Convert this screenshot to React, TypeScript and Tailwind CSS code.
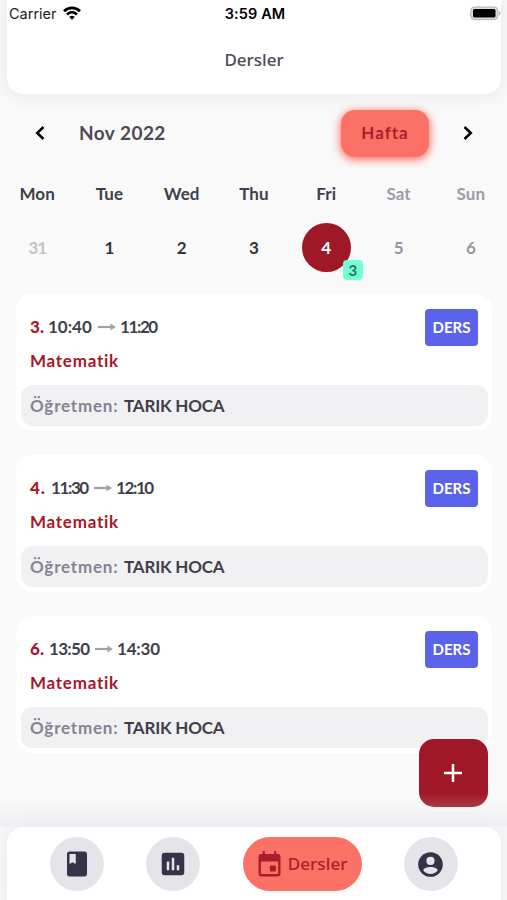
import React from "react";
import { MdAssessment, MdBook } from "react-icons/md";

const days = [
  { name: "Mon", date: 31, nameColor: "text-[#3f3f4b]", dateColor: "text-[#c3c3c7] tracking-[-1.2px]" },
  { name: "Tue", date: 1, nameColor: "text-[#3f3f4b]", dateColor: "text-[#33333b]" },
  { name: "Wed", date: 2, nameColor: "text-[#3f3f4b]", dateColor: "text-[#33333b]" },
  { name: "Thu", date: 3, nameColor: "text-[#3f3f4b]", dateColor: "text-[#33333b]" },
  { name: "Fri", date: 4, nameColor: "text-[#3f3f4b]", dateColor: "text-white", lessons: 3 },
  { name: "Sat", date: 5, nameColor: "text-[#9c9ba9]", dateColor: "text-[#96969d]" },
  { name: "Sun", date: 6, nameColor: "text-[#9c9ba9]", dateColor: "text-[#96969d]" },
];

const lessons = [
  {
    order: 3,
    start: "10:40",
    end: "11:20",
    orderClass: "w-[18px]",
    startClass: "w-[45px]",
    endClass: "tracking-[-1.4px]",
  },
  {
    order: 4,
    start: "11:30",
    end: "12:10",
    orderClass: "w-[21px] tracking-[0.8px]",
    startClass: "w-[38px] tracking-[-1.4px]",
    endClass: "tracking-[-1.4px]",
  },
  {
    order: 6,
    start: "13:50",
    end: "14:30",
    orderClass: "w-[19px]",
    startClass: "w-[41px] tracking-[-0.7px]",
    endClass: "tracking-[-0.2px]",
  },
];

type Lesson = (typeof lessons)[number];

const StatusBar: React.FC = () => (
  <div className="grid h-7 grid-cols-3 items-center pl-[9px] pr-[6px] font-['Inter',sans-serif] text-[14.5px] text-[#202022]">
    <div className="flex items-center gap-[6px]">
      <span>Carrier</span>
      <svg className="-mt-[2px] h-[14px] w-[18px]" viewBox="0 0 18 14" fill="none" stroke="#000" strokeWidth="2.7">
        <path d="M1 5.2C5.6.8 12.4.8 17 5.2" />
        <path d="M4 8.4c2.9-2.7 7.1-2.7 10 0" />
        <path d="M6.2 10.9 9 13.7l2.8-2.8c-1.7-1.4-3.9-1.4-5.6 0Z" fill="#000" stroke="none" />
      </svg>
    </div>
    <span className="text-center font-semibold tracking-[0.1px] text-black">3:59 AM</span>
    <svg className="-mt-[2px] h-[15px] w-[31px] justify-self-end" viewBox="0 0 31 15">
      <rect x="0.8" y="1" width="27" height="12.6" rx="3.6" fill="#dedede" stroke="#b0b0b0" />
      <rect x="3" y="3" width="22.5" height="8.6" rx="1.6" fill="#000" />
      <path d="M29 5.2c2 .8 2 3.4 0 4.2Z" fill="#aaa" />
    </svg>
  </div>
);

const CalendarIcon: React.FC = () => (
  <svg className="h-[26px] w-[23px]" viewBox="0 0 23 26">
    <rect x="1.7" y="4.2" width="19.6" height="20" rx="1.6" fill="none" stroke="#a71f2d" strokeWidth="2.4" />
    <path d="M1.5 3.5h20v7h-20z" fill="#a71f2d" />
    <path d="M5.8 1v4M17.2 1v4" stroke="#a71f2d" strokeWidth="2.2" strokeLinecap="round" />
    <rect x="11.8" y="14.4" width="6.2" height="6.2" rx="1" fill="#a71f2d" />
  </svg>
);

const AccountIcon: React.FC = () => (
  <svg className="h-[25px] w-[25px]" viewBox="0 0 25 25">
    <circle cx="12.5" cy="12.5" r="12.3" fill="#343347" />
    <circle cx="12.5" cy="8.9" r="4.1" fill="#e5e5e9" />
    <path d="M5.3 18.4c0-2.2 3.6-3.5 7.2-3.5s7.2 1.3 7.2 3.5c-1.7 2.3-4.3 3.5-7.2 3.5s-5.5-1.2-7.2-3.5Z" fill="#e5e5e9" />
  </svg>
);

const LessonCard: React.FC<{ lesson: Lesson }> = ({ lesson }) => (
  <div className="h-[137px] rounded-[16px] bg-white pl-[5px] pr-1 pt-[15px]">
    <div className="flex h-[76px] justify-between pl-[9px] pr-[10px]">
      <div>
        <div className="flex h-[36px] items-center text-[17px] font-bold text-[#3f3f4b]">
          <span className={`font-black text-[#a71728] ${lesson.orderClass}`}>{lesson.order}.</span>
          <span className={lesson.startClass}>{lesson.start}</span>
          <svg className="ml-[5px] mr-1 h-2 w-[18px]" viewBox="0 0 18 8">
            <path d="M0 4h14" stroke="#a0a0aa" strokeWidth="2.2" />
            <path d="m12.5 .6 5.3 3.4-5.3 3.4Z" fill="#a0a0aa" />
          </svg>
          <span className={lesson.endClass}>{lesson.end}</span>
        </div>
        <div className="flex h-[32px] items-center text-[17px] font-bold tracking-[0.75px] text-[#a71728]">
          Matematik
        </div>
      </div>
      <div className="flex h-[37px] w-[53px] items-center justify-center rounded-[4px] bg-[#5b63eb] text-[15px] font-bold text-white">
        DERS
      </div>
    </div>
    <div className="flex h-[41px] items-center gap-[5px] rounded-[12px] bg-[#f1f1f3] px-[9px] text-[17px] font-bold">
      <span className="w-[89px] tracking-[0.8px] text-[#858391]">Öğretmen:</span>
      <span className="tracking-[-0.2px] text-[#3f3f4b]">TARIK HOCA</span>
    </div>
  </div>
);

const App: React.FC = () => {
  return (
    <div className="relative flex h-[900px] w-[507px] flex-col overflow-hidden bg-[#f9f9f9] font-['Lato',sans-serif]">
      <header className="ml-[7px] mr-[6px] h-[94px] shrink-0 rounded-b-[16px] bg-white shadow-[0_0_16px_4px_#ededf2]">
        <div className="-ml-[7px] -mr-[6px]">
          <StatusBar />
        </div>
        <h1 className="mt-5 text-center font-['Noto_Sans',sans-serif] text-[17px] leading-6 font-medium text-[#4b4a55]">
          Dersler
        </h1>
      </header>

      <div className="mt-[15px] flex h-[48px] shrink-0 items-center pl-[34px] pr-[33px]">
        <svg className="h-[16px] w-[12px]" viewBox="0 0 12 16" fill="none" stroke="#000" strokeWidth="2.5">
          <path d="M9.5 2 3.2 8l6.3 6" />
        </svg>
        <span className="ml-[33px] flex-1 text-[19px] font-bold tracking-[0.45px] text-[#4b4a55]">Nov 2022</span>
        <button className="h-[47px] w-[88px] rounded-[14px] bg-[#fc7166] text-[17px] font-bold tracking-[1px] text-[#a71f2d] shadow-[0_2px_9px_1px_#fc7166]">
          Hafta
        </button>
        <svg className="ml-[33px] h-[16px] w-[12px]" viewBox="0 0 12 16" fill="none" stroke="#000" strokeWidth="2.5">
          <path d="m2.5 2 6.3 6-6.3 6" />
        </svg>
      </div>

      <div className="mt-[25px] grid h-[92px] shrink-0 grid-cols-7 pl-px text-center text-[17px] font-bold">
        {days.map((day) => (
          <div key={day.name} className="flex flex-col items-center">
            <span className={`h-[41px] leading-6 tracking-[0.1px] ${day.nameColor}`}>{day.name}</span>
            <div
              className={`relative flex h-[49px] w-[49px] items-center justify-center rounded-full ${day.dateColor} ${
                day.lessons ? "bg-[#9f1827]" : ""
              }`}
            >
              {day.date}
              {day.lessons && (
                <span className="absolute top-[37px] left-[41px] h-5 w-5 rounded-[4px] bg-[#73ffd5] text-[15px] leading-5 text-[#24775e]">
                  {day.lessons}
                </span>
              )}
            </div>
          </div>
        ))}
      </div>

      <main className="mt-[20px] flex flex-col gap-6 pl-4 pr-[15px]">
        {lessons.map((lesson) => (
          <LessonCard key={lesson.order} lesson={lesson} />
        ))}
      </main>

      <div className="pointer-events-none absolute inset-x-0 bottom-[73px] h-7 bg-linear-to-b from-transparent to-[#f0f0f4]" />

      <button className="absolute top-[739px] left-[419px] flex h-[68px] w-[69px] items-center justify-center rounded-[15px] bg-linear-to-b from-[#9f1827] from-80% to-[#ad3643]">
        <svg className="mr-px h-[18px] w-[18px]" viewBox="0 0 18 18" stroke="#fff" strokeWidth="2.5">
          <path d="M9 0v18M0 9h18" />
        </svg>
      </button>

      <nav className="absolute right-[6px] bottom-0 left-[7px] flex h-[73px] justify-between rounded-t-[16px] bg-white pt-[10px] pl-[43px] pr-[43px] text-[#343347] shadow-[0_0_16px_4px_#ededf2]">
        <button className="flex h-[54px] w-[54px] items-center justify-center rounded-full bg-[#e5e5e9]">
          <MdBook size={30} />
        </button>
        <button className="flex h-[54px] w-[54px] items-center justify-center rounded-full bg-[#e5e5e9]">
          <MdAssessment size={30} />
        </button>
        <button className="flex h-[54px] w-[119px] items-center gap-[7px] rounded-full bg-[#fc7166] pl-[15px] text-[#a71f2d]">
          <CalendarIcon />
          <span className="font-['Noto_Sans',sans-serif] text-[17px] font-medium tracking-[0.1px]">Dersler</span>
        </button>
        <button className="flex h-[54px] w-[54px] items-center justify-center rounded-full bg-[#e5e5e9]">
          <AccountIcon />
        </button>
      </nav>
    </div>
  );
};

export default App;
